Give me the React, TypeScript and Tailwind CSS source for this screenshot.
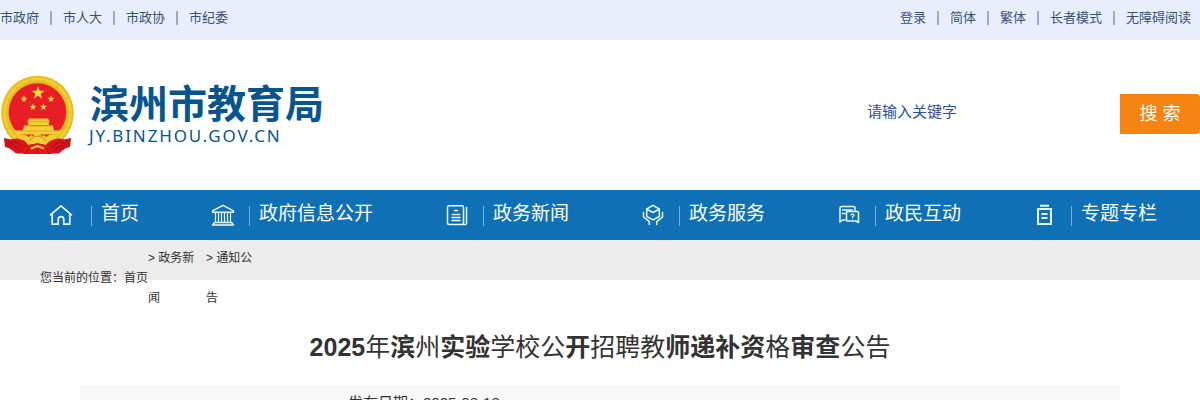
import React from 'react';

const leftLinks = ['市政府', '市人大', '市政协', '市纪委'];
const rightLinks = ['登录', '简体', '繁体', '长者模式', '无障碍阅读'];

const titleParts = [
  { text: '2025', bold: true },
  { text: '年', bold: false },
  { text: '滨', bold: true },
  { text: '州', bold: false },
  { text: '实验', bold: true },
  { text: '学校公', bold: false },
  { text: '开', bold: true },
  { text: '招聘教', bold: false },
  { text: '师递补资', bold: true },
  { text: '格', bold: false },
  { text: '审查', bold: true },
  { text: '公告', bold: false },
];

interface IconProps {
  children: React.ReactNode;
}

function NavSvg({ children }: IconProps) {
  return (
    <svg
      viewBox="0 0 24 24"
      className="h-6 w-6 shrink-0"
      fill="none"
      stroke="#e8faff"
      strokeWidth="1.5"
      strokeLinejoin="round"
      strokeLinecap="round"
    >
      {children}
    </svg>
  );
}

const HomeIcon = () => (
  <NavSvg>
    <path
      d="M1.500 11.800 12 2.800l10.500 9M3.200 11v10.200h6v-4.700a2.800 2.800 0 0 1 5.600 0v4.700h6V11"
      strokeWidth="1.700"
    />
  </NavSvg>
);

const BankIcon = () => (
  <NavSvg>
    <path d="M1.500 7.800 12 2.300l10.500 5.500v1.400h-21zM3.500 19.500h17l2 2.500h-21z" strokeWidth="1.400" />
    <path d="M4.500 9.500v9.500M7.500 9.500v9.500M10.500 9.500v9.500M13.500 9.500v9.500M16.500 9.500v9.500M19.500 9.500v9.500" strokeWidth="1.200" />
  </NavSvg>
);

const NewsIcon = () => (
  <NavSvg>
    <rect x="2.500" y="2.700" width="16" height="18.800" rx="1.500" />
    <path d="M18 21.500h2.500a1 1 0 0 0 1-1V4.500M9.500 7.500h3M7.500 11.500h7M7 14.500h8M7 17.500h8" />
  </NavSvg>
);

const ServiceIcon = () => (
  <NavSvg>
    <path d="m12 2.300 6.300 3.700v7.500L12 16.800l-6.300-3.300V6zM6 6.300l6 3.200 6-3.200" />
    <path d="M2.500 9.500V14l5.800 4.700v2.800M21.500 9.500V14l-5.800 4.700v2.800" />
  </NavSvg>
);

const ChatIcon = () => (
  <NavSvg>
    <path d="M8 17H5.500L3 19V5a1.500 1.500 0 0 1 1.500-1.500h12A1.500 1.500 0 0 1 18 5v2.500M5.500 7h9.500M5.500 10.500h2.500" />
    <path d="M10.500 8.500h10a1 1 0 0 1 1 1v10L19 18h-8.500a1 1 0 0 1-1-1V9.500a1 1 0 0 1 1-1z" />
    <path d="M14 12.200c.200-1.500 3.200-1.300 3 .2-.1 1-1.500.9-1.500 2M15.500 16v.1" strokeWidth="1.200" />
  </NavSvg>
);

const TopicIcon = () => (
  <NavSvg>
    <path
      d="M5 6h13v15H5zM7 2.800h9M8.500 11h6M8.500 15h6"
      strokeWidth="2"
      strokeLinejoin="miter"
      strokeLinecap="butt"
    />
  </NavSvg>
);

const navItems = [
  { label: '首页', icon: <HomeIcon />, width: 'w-[162px]', gap: 'ml-[18px]' },
  { label: '政府信息公开', icon: <BankIcon />, width: 'w-[234px]', gap: 'ml-[14px]' },
  { label: '政务新闻', icon: <NewsIcon />, width: 'w-[196px]', gap: 'ml-[14px]' },
  { label: '政务服务', icon: <ServiceIcon />, width: 'w-[196px]', gap: 'ml-[14px]' },
  { label: '政民互动', icon: <ChatIcon />, width: 'w-[196px]', gap: 'ml-[14px]' },
  { label: '专题专栏', icon: <TopicIcon />, width: 'w-[167px]', gap: 'ml-[14px]' },
];

function Star({ x, y, size }: { x: number; y: number; size: number }) {
  return (
    <path
      transform={`translate(${x} ${y}) scale(${size})`}
      d="M0-1 .24-.32.95-.31.38.12.59.81 0 .4-.59.81-.38.12-.95-.31-.24-.32z"
      fill="#f8dc3c"
    />
  );
}

function Emblem() {
  return (
    <svg viewBox="0 0 76 82" className="h-[82px] w-[76px] shrink-0">
      {/* wheat ring */}
      <ellipse cx="37.500" cy="38" rx="36.300" ry="37.300" fill="#e6bb20" />
      <ellipse cx="37.500" cy="38" rx="33" ry="34" fill="none" stroke="#f0cf35" strokeWidth="3" strokeDasharray="14 1" />
      <circle cx="37.500" cy="37" r="28.800" fill="#e81d25" />
      <Star x={38} y={18} size={7} />
      <Star x={24} y={24} size={3.700} />
      <Star x={51} y={24} size={3.700} />
      <Star x={33} y={32} size={3.600} />
      <Star x={43.500} y={32} size={3.600} />
      {/* gate */}
      <path d="M29 43.500h19l2 3.500H27zM28 47h21v3H28zM24 50.500h29l1 5H23zM14 55.500h48l-2 4H16z" fill="#f3cf35" />
      <path d="M27 46.800h23M24 51h29M16 56h44" stroke="#c58d14" strokeWidth=".5" />
      {/* ribbons hanging from both sides of the ring */}
      <path d="M9 65q8-3 14 0l6 4h17l6-4q6-3 14 0v8l-4 3-3 2.500H16L13 76l-4-3z" fill="#d9141d" />
      <path d="M4 63l9 2-1 9-7-2zM71 63l-9 2 1 9 7-2z" fill="#c9131c" />
      <path d="M11 67q8-1 12 6M14 72q5 0 8 5M64 67q-8-1-12 6M61 72q-5 0-8 5" fill="none" stroke="#a80d16" strokeWidth="1" />
      {/* gear */}
      <path d="M17 60q8-2 12 2l2-2 2 1 2-2h5l2 2 2-1 2 2q4-4 12-2l-3 4q-6 0-9 6l-5-1-4 3-4-3-5 1q-3-6-9-6z" fill="#f1cc32" />
      <path d="M30 66a7.500 5 0 0 1 15 0" fill="none" stroke="#c58d14" strokeWidth="1" />
      <path d="M26 71l11.500-3 11.500 3 3 8H23z" fill="#e21820" />
      <path d="M31 73.500l6.500-2.500 6.500 2.500" fill="none" stroke="#f1cc32" strokeWidth="2" />
      <path d="M28 73l-2 6M47 73l2 6M37.500 74v5" stroke="#a80d16" strokeWidth=".8" />
    </svg>
  );
}

function LinkRow({ links }: { links: string[] }) {
  return (
    <div className="flex items-center whitespace-nowrap">
      {links.map((link, i) => (
        <React.Fragment key={link}>
          {i > 0 && <span className="mx-[11px] h-[14px] w-[2px] bg-[#9babc7]" />}
          <a href="#">{link}</a>
        </React.Fragment>
      ))}
    </div>
  );
}

export default function App() {
  return (
    <div className="h-[400px] w-[1200px] overflow-hidden bg-white font-['Liberation_Sans','Noto_Sans_CJK_SC',sans-serif] text-[#333]">
      <div className="flex h-10 justify-between bg-[#e8eefb] pr-[9px] pb-1 text-[13px] text-[#3b5076]">
        <LinkRow links={leftLinks} />
        <LinkRow links={rightLinks} />
      </div>

      <header className="flex h-[150px] justify-between">
        <div className="flex pt-[35px]">
          <Emblem />
          <div className="ml-[14px] text-[#07558f]">
            <h1 className="h-[52px] text-[39px] leading-[52px] font-bold whitespace-nowrap font-['Noto_Sans_CJK_SC',sans-serif]">
              滨州市教育局
            </h1>
            <p className="-ml-px text-[17px] leading-[18px] tracking-[1.85px] font-['Noto_Sans',sans-serif]">
              JY.BINZHOU.GOV.CN
            </p>
          </div>
        </div>
        <div className="flex pt-[54px]">
          <div className="w-[253px] text-[15px] leading-9 text-[#2a5291]">请输入关键字</div>
          <button className="h-10 w-20 rounded-r-[4px] bg-[#f68412] pt-px text-[18px] whitespace-pre text-white">
            搜 索
          </button>
        </div>
      </header>

      <nav className="flex h-[50px] bg-[#1070b5] pl-[49px] text-[19px] text-white">
        {navItems.map((item) => (
          <a key={item.label} href="#" className={`flex shrink-0 pt-[13px] whitespace-nowrap ${item.width}`}>
            {item.icon}
            <span className={`mt-[3px] h-5 w-px bg-[#6ab2e8] ${item.gap}`} />
            <span className="-mt-1 ml-[9px] leading-[30px]">{item.label}</span>
          </a>
        ))}
      </nav>

      <div className="flex h-10 bg-[#ececec] pl-10 text-[12px] leading-10">
        <span className="mt-[18px] whitespace-nowrap">您当前的位置：首页</span>
        <span className="-mt-[2px] w-[58px]">
          &gt; 政务新
          <br />闻
        </span>
        <span className="-mt-[2px] w-[58px]">
          &gt; 通知公
          <br />告
        </span>
      </div>

      <h2 className="mt-[47px] h-10 text-center text-[25px] leading-10 whitespace-nowrap">
        {titleParts.map((part, i) => (
          <span key={i} className={part.bold ? 'font-bold' : 'font-normal'}>
            {part.text}
          </span>
        ))}
      </h2>

      <div className="mx-20 mt-[18px] h-[50px] bg-[#f8f8f8] pl-[268px] text-[15px] leading-9">
        发布日期：2025-08-18
      </div>
    </div>
  );
}
